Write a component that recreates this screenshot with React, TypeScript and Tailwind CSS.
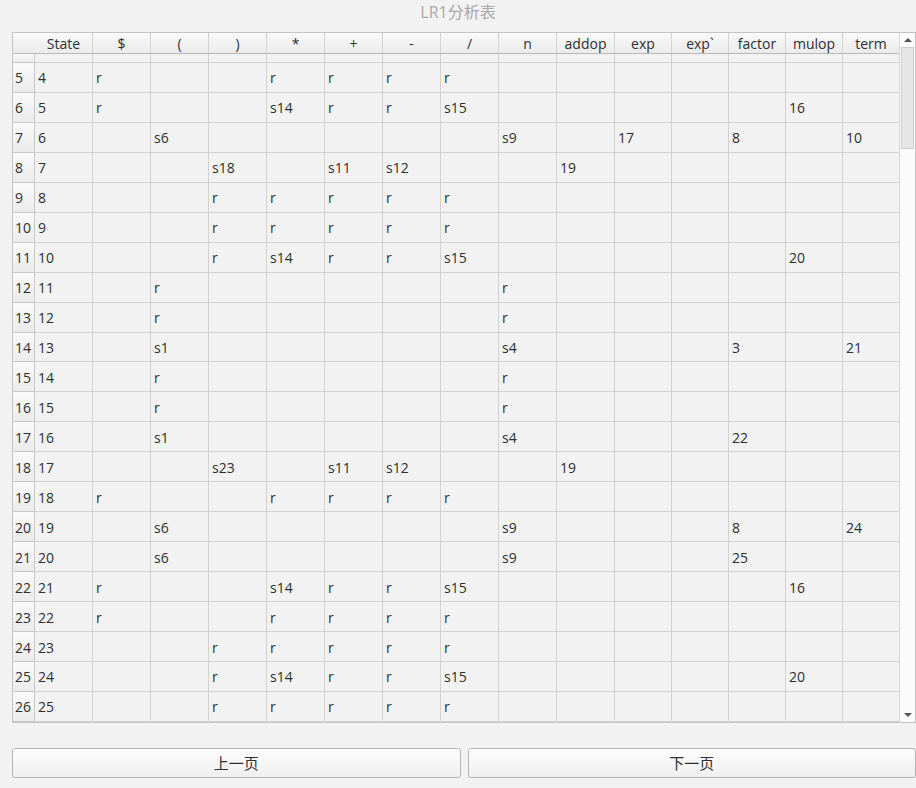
const COLS = ["State", "$", "(", ")", "*", "+", "-", "/", "n", "addop", "exp", "exp`", "factor", "mulop", "term"];

// state -> { column: value }
const TABLE: Record<number, Record<string, string>> = {
  4: { $: "r", "*": "r", "+": "r", "-": "r", "/": "r" },
  5: { $: "r", "*": "s14", "+": "r", "-": "r", "/": "s15", mulop: "16" },
  6: { "(": "s6", n: "s9", exp: "17", factor: "8", term: "10" },
  7: { ")": "s18", "+": "s11", "-": "s12", addop: "19" },
  8: { ")": "r", "*": "r", "+": "r", "-": "r", "/": "r" },
  9: { ")": "r", "*": "r", "+": "r", "-": "r", "/": "r" },
  10: { ")": "r", "*": "s14", "+": "r", "-": "r", "/": "s15", mulop: "20" },
  11: { "(": "r", n: "r" },
  12: { "(": "r", n: "r" },
  13: { "(": "s1", n: "s4", factor: "3", term: "21" },
  14: { "(": "r", n: "r" },
  15: { "(": "r", n: "r" },
  16: { "(": "s1", n: "s4", factor: "22" },
  17: { ")": "s23", "+": "s11", "-": "s12", addop: "19" },
  18: { $: "r", "*": "r", "+": "r", "-": "r", "/": "r" },
  19: { "(": "s6", n: "s9", factor: "8", term: "24" },
  20: { "(": "s6", n: "s9", factor: "25" },
  21: { $: "r", "*": "s14", "+": "r", "-": "r", "/": "s15", mulop: "16" },
  22: { $: "r", "*": "r", "+": "r", "-": "r", "/": "r" },
  23: { ")": "r", "*": "r", "+": "r", "-": "r", "/": "r" },
  24: { ")": "r", "*": "s14", "+": "r", "-": "r", "/": "s15", mulop: "20" },
  25: { ")": "r", "*": "r", "+": "r", "-": "r", "/": "r" },
};

const states = Array.from({ length: 22 }, (_, i) => i + 4);

const gridCols = "grid grid-cols-[22px_repeat(10,58px)_repeat(5,57px)]";

export default function App() {
  return (
    <div
      className="w-[916px] h-[788px] bg-[#f2f2f2] flex flex-col text-[#2e2e2e] overflow-hidden"
      style={{ fontFamily: '"Open Sans", "Noto Sans CJK SC", sans-serif' }}
    >
      <div className="h-[32px] flex items-start justify-center text-[16px] text-[#a9a9a9]">
        LR1分析表
      </div>

      <div className="ml-[12px] w-[904px] h-[691px] border border-[#c4c4c4] flex bg-[#f2f2f2]">
        <div className="w-[886px] flex flex-col overflow-hidden text-[14px]">
          {/* horizontal header */}
          <div className={`${gridCols} h-[21px] border-b border-[#b8b8b8]`}>
            <div className="bg-gradient-to-b from-[#fafafa] to-[#ebebeb]" />
            {COLS.map((c) => (
              <div
                key={c}
                className="bg-gradient-to-b from-[#fafafa] to-[#ebebeb] border-r border-[#d2d2d2] flex items-center justify-center leading-none pt-[2px]"
              >
                {c}
              </div>
            ))}
          </div>
          {/* partially scrolled row */}
          <div className={`${gridCols} h-[9px]`}>
            <div className="bg-gradient-to-b from-[#fafafa] to-[#ebebeb] border-r border-b border-[#c8c8c8]" />
            {COLS.map((c) => (
              <div key={c} className="border-r border-b border-[#d2d2d2]" />
            ))}
          </div>
          {states.map((s) => (
            <div key={s} className={`${gridCols} h-[30px]`}>
              <div className="bg-gradient-to-b from-[#fafafa] to-[#ebebeb] border-r border-b border-[#c8c8c8] flex items-center pl-[2px] pt-[1px]">
                {s + 1}
              </div>
              {COLS.map((c) => (
                <div key={c} className="border-r border-b border-[#d2d2d2] flex items-center pl-[3px] pt-[1px]">
                  {c === "State" ? s : TABLE[s]?.[c] ?? ""}
                </div>
              ))}
            </div>
          ))}
        </div>

        {/* vertical scrollbar */}
        <div className="w-[16px] flex flex-col bg-[#fbfbfb] border-l border-[#d6d6d6]">
          <div className="h-[14px] flex items-center justify-center">
            <div className="w-0 h-0 border-l-[4px] border-r-[4px] border-b-[4px] border-l-transparent border-r-transparent border-b-[#555555]" />
          </div>
          <div className="h-[102px] bg-[#e6e6e6] border border-[#cdcdcd] mx-[1px]" />
          <div className="flex-1" />
          <div className="h-[14px] flex items-center justify-center">
            <div className="w-0 h-0 border-l-[4px] border-r-[4px] border-t-[4px] border-l-transparent border-r-transparent border-t-[#555555]" />
          </div>
        </div>
      </div>

      <div className="mt-[25px] ml-[12px] flex gap-[7px]">
        {["上一页", "下一页"].map((t) => (
          <button
            key={t}
            className="w-[449px] h-[30px] rounded-[3px] border border-[#b4b4b4] bg-gradient-to-b from-[#fdfdfd] to-[#efefef] text-[15px] text-[#2e2e2e] flex items-center justify-center"
          >
            {t}
          </button>
        ))}
      </div>
    </div>
  );
}
